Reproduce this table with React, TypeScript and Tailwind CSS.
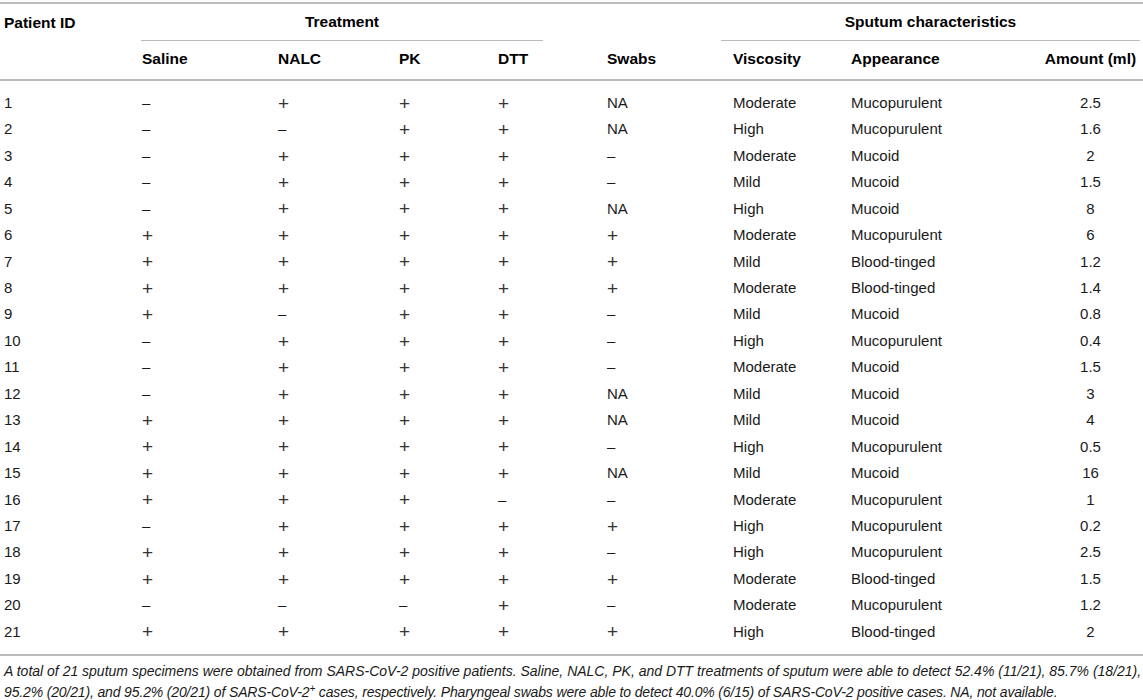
const rows: string[][] = [
  ["1", "–", "+", "+", "+", "NA", "Moderate", "Mucopurulent", "2.5"],
  ["2", "–", "–", "+", "+", "NA", "High", "Mucopurulent", "1.6"],
  ["3", "–", "+", "+", "+", "–", "Moderate", "Mucoid", "2"],
  ["4", "–", "+", "+", "+", "–", "Mild", "Mucoid", "1.5"],
  ["5", "–", "+", "+", "+", "NA", "High", "Mucoid", "8"],
  ["6", "+", "+", "+", "+", "+", "Moderate", "Mucopurulent", "6"],
  ["7", "+", "+", "+", "+", "+", "Mild", "Blood-tinged", "1.2"],
  ["8", "+", "+", "+", "+", "+", "Moderate", "Blood-tinged", "1.4"],
  ["9", "+", "–", "+", "+", "–", "Mild", "Mucoid", "0.8"],
  ["10", "–", "+", "+", "+", "–", "High", "Mucopurulent", "0.4"],
  ["11", "–", "+", "+", "+", "–", "Moderate", "Mucoid", "1.5"],
  ["12", "–", "+", "+", "+", "NA", "Mild", "Mucoid", "3"],
  ["13", "+", "+", "+", "+", "NA", "Mild", "Mucoid", "4"],
  ["14", "+", "+", "+", "+", "–", "High", "Mucopurulent", "0.5"],
  ["15", "+", "+", "+", "+", "NA", "Mild", "Mucoid", "16"],
  ["16", "+", "+", "+", "–", "–", "Moderate", "Mucopurulent", "1"],
  ["17", "–", "+", "+", "+", "+", "High", "Mucopurulent", "0.2"],
  ["18", "+", "+", "+", "+", "–", "High", "Mucopurulent", "2.5"],
  ["19", "+", "+", "+", "+", "+", "Moderate", "Blood-tinged", "1.5"],
  ["20", "–", "–", "–", "+", "–", "Moderate", "Mucopurulent", "1.2"],
  ["21", "+", "+", "+", "+", "+", "High", "Blood-tinged", "2"],
]

// column paddings, matched to the reference's text starts
const cellPad = ["pl-1", "pl-1", "pl-1", "pl-1", "pl-1", "pl-1", "pl-3", "pl-1", "px-1 justify-center"]
const subHeads = ["", "Saline", "NALC", "PK", "DTT", "Swabs", "Viscosity", "Appearance", "Amount (ml)"]

const grid = "grid grid-cols-[138px_136px_121px_99px_109px_118px_126px_191px_105px]"

function Cell({ v, pad }: { v: string; pad: string }) {
  // plus signs in the source are drawn larger and thinner than the body text
  if (v === "+") {
    return (
      <div className={`${pad} flex items-center`}>
        <span className="text-[19px] leading-none font-light text-[#333]">+</span>
      </div>
    )
  }
  return <div className={`${pad} flex items-center`}>{v}</div>
}

export default function App() {
  return (
    <div className="w-[1143px] h-[700px] bg-white text-[15px] text-[#1a1a1a] overflow-hidden" style={{ fontFamily: '"Liberation Sans", Arial, sans-serif' }}>
      <div className="mt-[2px] border-t-2 border-[#bcbcbc]">
        {/* header row 1 */}
        <div className={`${grid} h-[37px] font-bold text-[15.5px] text-black`}>
          <div className="pl-1 flex items-center">Patient ID</div>
          <div className="col-span-4 flex">
            <div className="ml-[3px] w-[402px] border-b border-[#bcbcbc] flex items-center justify-center">Treatment</div>
          </div>
          <div />
          <div className="col-span-3 flex">
            <div className="w-[419px] border-b border-[#bcbcbc] flex items-center justify-center">Sputum characteristics</div>
          </div>
        </div>
        {/* header row 2 */}
        <div className={`${grid} h-[40px] pb-[3px] font-bold text-[15.5px] text-black border-b-2 border-[#bcbcbc]`}>
          {subHeads.map((h, i) => (
            <div key={i} className={`${cellPad[i]} flex items-center`}>{h}</div>
          ))}
        </div>
        {/* body */}
        <div className="pt-[9px] pb-[8.5px] border-b-2 border-[#bcbcbc]">
          {rows.map((r) => (
            <div key={r[0]} className={`${grid} h-[26.45px]`}>
              {r.map((v, i) => (
                <Cell key={i} v={v} pad={cellPad[i]} />
              ))}
            </div>
          ))}
        </div>
        <p className="pt-[5px] pl-1 italic text-[14px] leading-[21px] whitespace-nowrap">
          A total of 21 sputum specimens were obtained from SARS-CoV-2 positive patients. Saline, NALC, PK, and DTT treatments of sputum were able to detect 52.4% (11/21), 85.7% (18/21),
          <br />
          <span className="tracking-[-0.15px]">
            95.2% (20/21), and 95.2% (20/21) of SARS-CoV-2<sup className="text-[10px]">+</sup> cases, respectively. Pharyngeal swabs were able to detect 40.0% (6/15) of SARS-CoV-2 positive cases. NA, not available.
          </span>
        </p>
      </div>
    </div>
  )
}
